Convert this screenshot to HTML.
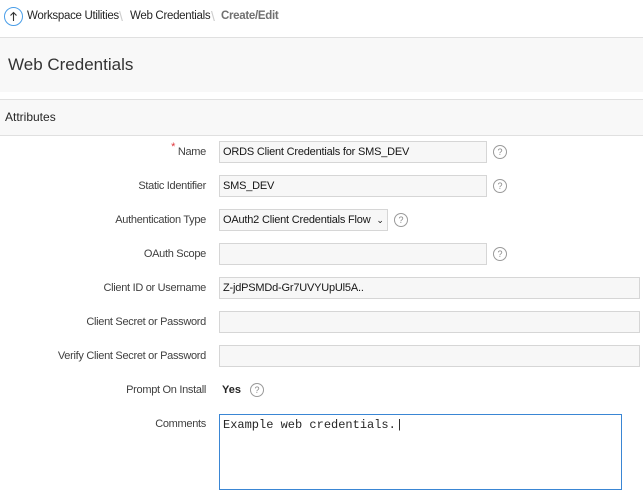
<!DOCTYPE html>
<html><head><style>
body{margin:0;width:643px;height:491px;overflow:hidden;background:#fff;font-family:"Liberation Sans",sans-serif;color:#262626;position:relative}
.a{position:absolute;white-space:nowrap}
.bc{top:0;left:0;width:643px;height:37px;border-bottom:1px solid #e0e0e0;font-size:11.5px;letter-spacing:-0.3px}
.hd{top:38px;left:0;width:643px;height:54px;background:#f8f8f8}
.at{top:99px;left:0;width:643px;height:35px;background:#f8f8f8;border-top:1px solid #e0e0e0;border-bottom:1px solid #e0e0e0}
.lb{width:206px;left:0;text-align:right;font-size:11px;letter-spacing:-0.3px;color:#404040}
.in{left:219px;height:20px;border:1px solid #d6d6d6;background:#f7f7f7;font-size:11px;letter-spacing:-0.2px;line-height:21px;padding-left:3px;box-sizing:content-box;color:#161616;overflow:hidden}
.q{width:12px;height:12px;border:1px solid #9a9a9a;border-radius:50%;font-size:9px;color:#888;text-align:center;line-height:12px}
</style></head><body>
<div class="a bc">
<div class="a" style="left:4px;top:7px;width:17px;height:17px;border:1.3px solid #4a9ee8;border-radius:50%"></div>
<svg class="a" style="left:6px;top:9px" width="15" height="15" viewBox="0 0 15 15"><path d="M7.5 12V3.5M4.5 6.5l3-3 3 3" stroke="#333" stroke-width="1.1" fill="none"/></svg>
<span class="a" style="left:27px;top:10px">Workspace Utilities</span>
<span class="a" style="left:119px;top:8px;color:#ccc;font-size:14px">\</span>
<span class="a" style="left:130px;top:10px">Web Credentials</span>
<span class="a" style="left:211px;top:8px;color:#ccc;font-size:14px">\</span>
<span class="a" style="left:221px;top:10px;color:#707070;font-weight:bold">Create/Edit</span>
</div>
<div class="a hd"><span class="a" style="left:8px;top:17px;font-size:17px;color:#333">Web Credentials</span></div>
<div class="a at"><span class="a" style="left:5px;top:10px;font-size:12px">Attributes</span></div>

<div class="a lb" style="top:146px"><span style="color:#e0383e;position:relative;top:-5px;font-size:11px">*</span> Name</div>
<div class="a in" style="top:141px;width:263px">ORDS Client Credentials for SMS_DEV</div>
<div class="a q" style="left:493px;top:145px">?</div>

<div class="a lb" style="top:180px">Static Identifier</div>
<div class="a in" style="top:175px;width:263px">SMS_DEV</div>
<div class="a q" style="left:493px;top:179px">?</div>

<div class="a lb" style="top:214px">Authentication Type</div>
<div class="a in" style="top:209px;width:164px">OAuth2 Client Credentials Flow <span style="font-size:9px;margin-left:3px">&#8964;</span></div>
<div class="a q" style="left:394px;top:213px">?</div>

<div class="a lb" style="top:248px">OAuth Scope</div>
<div class="a in" style="top:243px;width:263px"></div>
<div class="a q" style="left:493px;top:247px">?</div>

<div class="a lb" style="top:282px">Client ID or Username</div>
<div class="a in" style="top:277px;width:416px">Z-jdPSMDd-Gr7UVYUpUl5A..</div>

<div class="a lb" style="top:316px">Client Secret or Password</div>
<div class="a in" style="top:311px;width:416px"></div>

<div class="a lb" style="top:350px">Verify Client Secret or Password</div>
<div class="a in" style="top:345px;width:416px"></div>

<div class="a lb" style="top:384px">Prompt On Install</div>
<div class="a" style="left:222px;top:384px;font-size:11px;font-weight:bold">Yes</div>
<div class="a q" style="left:250px;top:383px">?</div>

<div class="a lb" style="top:418px">Comments</div>
<div class="a" style="left:219px;top:414px;border:1px solid #3a86d4;font-family:'Liberation Mono',monospace;font-size:12px;padding:3px 0 0 3px;box-sizing:border-box;width:403px;height:76px">Example web credentials.|</div>
</body></html>
